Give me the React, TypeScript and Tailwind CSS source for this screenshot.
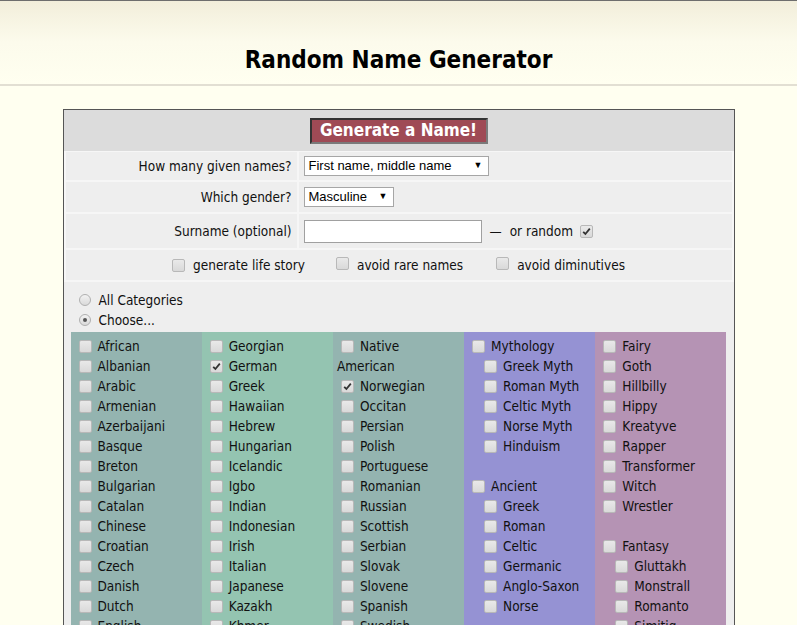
import React from "react";

const font = "font-['DejaVu_Sans_Condensed','DejaVu_Sans',sans-serif]";

type Item = { name: string; checked?: boolean; sub?: boolean; blank?: boolean };

const columns: { bg: string; items: Item[] }[] = [
  {
    bg: "bg-[#94b4b0]",
    items: [
      "African", "Albanian", "Arabic", "Armenian", "Azerbaijani", "Basque", "Breton", "Bulgarian",
      "Catalan", "Chinese", "Croatian", "Czech", "Danish", "Dutch", "English",
    ].map((name) => ({ name })),
  },
  {
    bg: "bg-[#94c4b1]",
    items: [
      "Georgian", "German", "Greek", "Hawaiian", "Hebrew", "Hungarian", "Icelandic", "Igbo",
      "Indian", "Indonesian", "Irish", "Italian", "Japanese", "Kazakh", "Khmer",
    ].map((name) => ({ name, checked: name === "German" })),
  },
  {
    bg: "bg-[#94b4b0]",
    items: [
      "Native American", "Norwegian", "Occitan", "Persian", "Polish", "Portuguese", "Romanian",
      "Russian", "Scottish", "Serbian", "Slovak", "Slovene", "Spanish", "Swedish",
    ].map((name) => ({ name, checked: name === "Norwegian" })),
  },
  {
    bg: "bg-[#9592d3]",
    items: [
      { name: "Mythology" },
      { name: "Greek Myth", sub: true },
      { name: "Roman Myth", sub: true },
      { name: "Celtic Myth", sub: true },
      { name: "Norse Myth", sub: true },
      { name: "Hinduism", sub: true },
      { name: "", blank: true },
      { name: "Ancient" },
      { name: "Greek", sub: true },
      { name: "Roman", sub: true },
      { name: "Celtic", sub: true },
      { name: "Germanic", sub: true },
      { name: "Anglo-Saxon", sub: true },
      { name: "Norse", sub: true },
    ],
  },
  {
    bg: "bg-[#b593b4]",
    items: [
      { name: "Fairy" },
      { name: "Goth" },
      { name: "Hillbilly" },
      { name: "Hippy" },
      { name: "Kreatyve" },
      { name: "Rapper" },
      { name: "Transformer" },
      { name: "Witch" },
      { name: "Wrestler" },
      { name: "", blank: true },
      { name: "Fantasy" },
      { name: "Gluttakh", sub: true },
      { name: "Monstrall", sub: true },
      { name: "Romanto", sub: true },
      { name: "Simitiq", sub: true },
    ],
  },
];

function Box({ checked }: { checked?: boolean }) {
  return (
    <span className="inline-flex w-[13px] h-[13px] shrink-0 items-center justify-center rounded-[2px] border border-[#b8b8b8] bg-gradient-to-b from-[#e9e9e9] to-[#d9d9d9]">
      {checked && (
        <svg width="9" height="9" viewBox="0 0 9 9">
          <path d="M1.2 4.8 L3.4 7 L7.8 1.6" fill="none" stroke="#333" strokeWidth="1.8" />
        </svg>
      )}
    </span>
  );
}

function Radio({ checked }: { checked?: boolean }) {
  return (
    <span className="inline-flex w-[12px] h-[12px] shrink-0 items-center justify-center rounded-full border border-[#b0b0b0] bg-gradient-to-b from-[#f2f2f2] to-[#dadada]">
      {checked && <span className="w-[4px] h-[4px] rounded-full bg-[#555]" />}
    </span>
  );
}

function Row({ item }: { item: Item }) {
  if (item.blank) return <div className="h-[20px]" />;
  if (item.name === "Native American") {
    return (
      <div>
        <div className="flex items-center h-[20px] pl-[4px]">
          <Box />
          <span className="ml-[6px]">Native</span>
        </div>
        <div className="h-[20px] leading-[20px]">American</div>
      </div>
    );
  }
  return (
    <div className={`flex items-center h-[20px] ${item.sub ? "pl-[16px]" : "pl-[4px]"}`}>
      <Box checked={item.checked} />
      <span className="ml-[6px] whitespace-nowrap">{item.name}</span>
    </div>
  );
}

function Select({ value, width }: { value: string; width: string }) {
  return (
    <div
      className={`${width} h-[20px] flex items-center justify-between bg-white border border-[#a6a6a6] pl-[4px] pr-[5px] text-[13px] text-black font-['Liberation_Sans',Arial,sans-serif]`}
    >
      <span>{value}</span>
      <span className="text-[9px]">▼</span>
    </div>
  );
}

export default function App() {
  return (
    <div className={`min-h-screen bg-[#fffff0] text-[#111] ${font}`}>
      <header className="h-[86px] border-t border-[#6e6e6e] border-b-2 border-b-[#e2dfd3] bg-gradient-to-b from-[#f2eedb] via-[#fcfbec] to-[#fffff0] pt-[44px]">
        <h1 className="text-center text-[24px] leading-[30px] font-bold text-black">Random Name Generator</h1>
      </header>

      <div className="mx-auto mt-[23px] w-[672px] border border-[#555] bg-[#f6f6f6] text-[13.5px]">
        <div className="h-[41px] flex items-center justify-center bg-[#dcdcdc]">
          <button className="h-[26px] w-[178px] bg-[#9f4a55] text-white font-bold text-[17px] leading-none border-2 border-t-[#333] border-l-[#333] border-b-[#7a7a7a] border-r-[#7a7a7a]">
            Generate a Name!
          </button>
        </div>

        <div className="grid grid-cols-[231px_1fr] gap-[2px] px-[2px] pt-[1px]">
          <div className="h-[28px] bg-[#eeeeee] flex items-center justify-end pr-[5px]">How many given names?</div>
          <div className="h-[28px] bg-[#eeeeee] flex items-center pl-[5px]">
            <Select value="First name, middle name" width="w-[185px]" />
          </div>

          <div className="h-[30px] bg-[#eeeeee] flex items-center justify-end pr-[5px]">Which gender?</div>
          <div className="h-[30px] bg-[#eeeeee] flex items-center pl-[5px]">
            <Select value="Masculine" width="w-[90px]" />
          </div>

          <div className="h-[34px] bg-[#eeeeee] flex items-center justify-end pr-[5px]">Surname (optional)</div>
          <div className="h-[34px] bg-[#eeeeee] flex items-center pl-[5px]">
            <div className="w-[178px] h-[23px] bg-white border border-[#a0a0a0]" />
            <span className="ml-[8px]">—</span>
            <span className="ml-[8px]">or random</span>
            <span className="ml-[7px]">
              <Box checked />
            </span>
          </div>

          <div className="col-span-2 h-[30px] bg-[#eeeeee] flex items-center justify-center">
            <Box />
            <span className="ml-[8px]">generate life story</span>
            <span className="ml-[31px]">
              <Box />
            </span>
            <span className="ml-[8px]">avoid rare names</span>
            <span className="ml-[33px]">
              <Box />
            </span>
            <span className="ml-[8px]">avoid diminutives</span>
          </div>
        </div>

        <div className="mt-[2px] bg-[#eeeeee] pt-[8px] px-[7px] pb-[10px]">
          <div className="pl-[8px]">
            <div className="flex items-center h-[20px]">
              <Radio />
              <span className="ml-[8px]">All Categories</span>
            </div>
            <div className="flex items-center h-[20px]">
              <Radio checked />
              <span className="ml-[8px]">Choose...</span>
            </div>
          </div>

          <div className="mt-[2px] grid grid-cols-5">
            {columns.map((col, i) => (
              <div key={i} className={`${col.bg} pt-[4px] pl-[4px] pb-[8px]`}>
                {col.items.map((item, j) => (
                  <Row key={j} item={item} />
                ))}
              </div>
            ))}
          </div>
        </div>
      </div>
    </div>
  );
}
